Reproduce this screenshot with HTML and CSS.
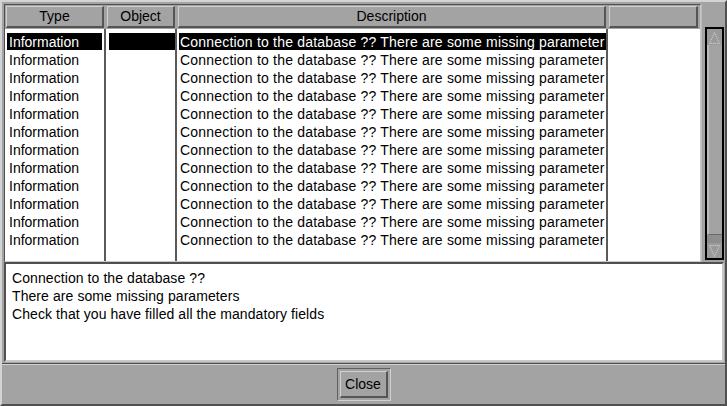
FILE: index.html
```html
<!DOCTYPE html>
<html>
<head>
<meta charset="utf-8">
<link rel="stylesheet" href="styles.css">
</head>
<body>
<div class="window">
  <div class="top">
    <div class="list">
      <div class="head cols">
        <div class="hcell">Type</div>
        <div class="hcell">Object</div>
        <div class="hcell">Description</div>
        <div class="hcell"></div>
      </div>
      <div class="body cols">
        <div class="col col-type">
          <div class="row"><span class="sel">Information</span></div>
          <div class="row"><span>Information</span></div>
          <div class="row"><span>Information</span></div>
          <div class="row"><span>Information</span></div>
          <div class="row"><span>Information</span></div>
          <div class="row"><span>Information</span></div>
          <div class="row"><span>Information</span></div>
          <div class="row"><span>Information</span></div>
          <div class="row"><span>Information</span></div>
          <div class="row"><span>Information</span></div>
          <div class="row"><span>Information</span></div>
          <div class="row"><span>Information</span></div>
        </div>
        <div class="col col-obj">
          <div class="row"><span class="sel"></span></div>
        </div>
        <div class="col col-desc">
          <div class="row"><span class="sel">Connection to the database ?? There are some missing parameter</span></div>
          <div class="row"><span>Connection to the database ?? There are some missing parameter</span></div>
          <div class="row"><span>Connection to the database ?? There are some missing parameter</span></div>
          <div class="row"><span>Connection to the database ?? There are some missing parameter</span></div>
          <div class="row"><span>Connection to the database ?? There are some missing parameter</span></div>
          <div class="row"><span>Connection to the database ?? There are some missing parameter</span></div>
          <div class="row"><span>Connection to the database ?? There are some missing parameter</span></div>
          <div class="row"><span>Connection to the database ?? There are some missing parameter</span></div>
          <div class="row"><span>Connection to the database ?? There are some missing parameter</span></div>
          <div class="row"><span>Connection to the database ?? There are some missing parameter</span></div>
          <div class="row"><span>Connection to the database ?? There are some missing parameter</span></div>
          <div class="row"><span>Connection to the database ?? There are some missing parameter</span></div>
        </div>
        <div class="col col-empty"></div>
      </div>
    </div>
    <div class="scrollcol">
      <div class="scrollbar">
        <svg class="arrow" width="15" height="15" viewBox="0 0 15 15">
          <polyline points="2.5,13.5 7.5,2.5 12.5,13.5 2.5,13.5" fill="none" stroke="#dcdcdc" stroke-width="1" stroke-dasharray="1 1"/>
        </svg>
        <div class="thumb"></div>
        <div class="trough"></div>
        <svg class="arrow" width="15" height="14" viewBox="0 0 15 14">
          <polyline points="2.5,1.5 7.5,12.5 12.5,1.5 2.5,1.5" fill="none" stroke="#dcdcdc" stroke-width="1" stroke-dasharray="1 1"/>
        </svg>
      </div>
    </div>
  </div>
  <div class="details">
    <div>Connection to the database ??</div>
    <div>There are some missing parameters</div>
    <div>Check that you have filled all the mandatory fields</div>
  </div>
  <div class="sep"></div>
  <div class="bottom">
    <div class="btn-ring"><button class="btn">Close</button></div>
  </div>
</div>
</body>
</html>
```
FILE: styles.css
```css
html, body {
  margin: 0;
  padding: 0;
}
body {
  background: #a3a3a3;
  font-family: "Liberation Sans", Arial, sans-serif;
  font-size: 14px;
  color: #000;
}
.window {
  width: 727px;
  height: 406px;
  box-sizing: border-box;
  border: 2px solid;
  border-color: #d4d4d4 #505050 #505050 #d4d4d4;
  display: flex;
  flex-direction: column;
  background: #a3a3a3;
}
.top {
  height: 260px;
  display: flex;
  padding: 2px 0 0 2px;
  box-sizing: border-box;
}
.list {
  width: 698px;
  height: 258px;
  box-sizing: border-box;
  border: 1px solid;
  border-color: #505050 #c8c8c8 #c8c8c8 #505050;
  display: flex;
  flex-direction: column;
  background: #a3a3a3;
}
.cols {
  display: grid;
  grid-template-columns: 101px 71px 431px 1fr;
}
.head {
  height: 24px;
  flex: none;
}
.hcell {
  margin: 1px 2px 1px 1px;
  border: 1px solid;
  border-width: 1px 2px 2px 1px;
  border-color: #d0d0d0 #555 #555 #d0d0d0;
  background: #a3a3a3;
  text-align: center;
  line-height: 19px;
  white-space: nowrap;
  overflow: hidden;
}
.body {
  flex: 1;
  background: #fff;
  overflow: hidden;
}
.col {
  padding-top: 4px;
  border-right: 2px solid #5a5a5a;
  overflow: hidden;
}
.col-empty {
  border-right: none;
}
.row {
  height: 18px;
  white-space: nowrap;
  overflow: hidden;
}
.col-type .row { padding: 0 2px 0 2px; }
.col-obj .row { padding: 0 0 0 3px; }
.col-desc .row { padding: 0 0 0 2px; }
.row span {
  display: block;
  height: 17px;
  line-height: 18px;
  padding-left: 2px;
  overflow: hidden;
  white-space: pre;
}
.col-desc .row span {
  padding-left: 1px;
  letter-spacing: 0.2px;
}
.row span.sel {
  background: #000;
  color: #fff;
}
.scrollcol {
  flex: 1;
  padding: 23px 1px 2px 3px;
  box-sizing: border-box;
  border-left: 1px solid #bcbcbc;
}
.scrollbar {
  width: 19px;
  height: 233px;
  box-sizing: border-box;
  border: 2px solid #000;
  background: #9a9a9a;
  display: flex;
  flex-direction: column;
}
.arrow {
  flex: none;
  display: block;
  margin: 1px 0 0 0;
}
.thumb {
  flex: 1;
  border-left: 2px solid #bdbdbd;
  border-bottom: 1px solid #6a6a6a;
  background: #a3a3a3;
}
.trough {
  height: 8px;
  background: #8e8e8e;
}
.details {
  margin: 0 1px 0 2px;
  height: 100px;
  box-sizing: border-box;
  border: 2px solid;
  border-color: #505050 #c8c8c8 #c8c8c8 #505050;
  background: #fff;
  padding: 5px 0 0 6px;
  line-height: 18px;
  letter-spacing: 0.08px;
}
.sep {
  margin-top: 1px;
  height: 0;
  border-top: 1px solid #505050;
  border-bottom: 1px solid #d0d0d0;
}
.bottom {
  flex: 1;
  display: flex;
  align-items: center;
  justify-content: center;
}
.btn-ring {
  border: 1px solid;
  border-color: #606060 #d0d0d0 #d0d0d0 #606060;
  padding: 2px;
}
.btn {
  display: block;
  width: 48px;
  height: 27px;
  box-sizing: border-box;
  border: 1px solid;
  border-width: 1px 2px 2px 1px;
  border-color: #d0d0d0 #555 #555 #d0d0d0;
  background: #a3a3a3;
  font-family: "Liberation Sans", Arial, sans-serif;
  font-size: 14px;
  color: #000;
  padding: 0;
}
```
